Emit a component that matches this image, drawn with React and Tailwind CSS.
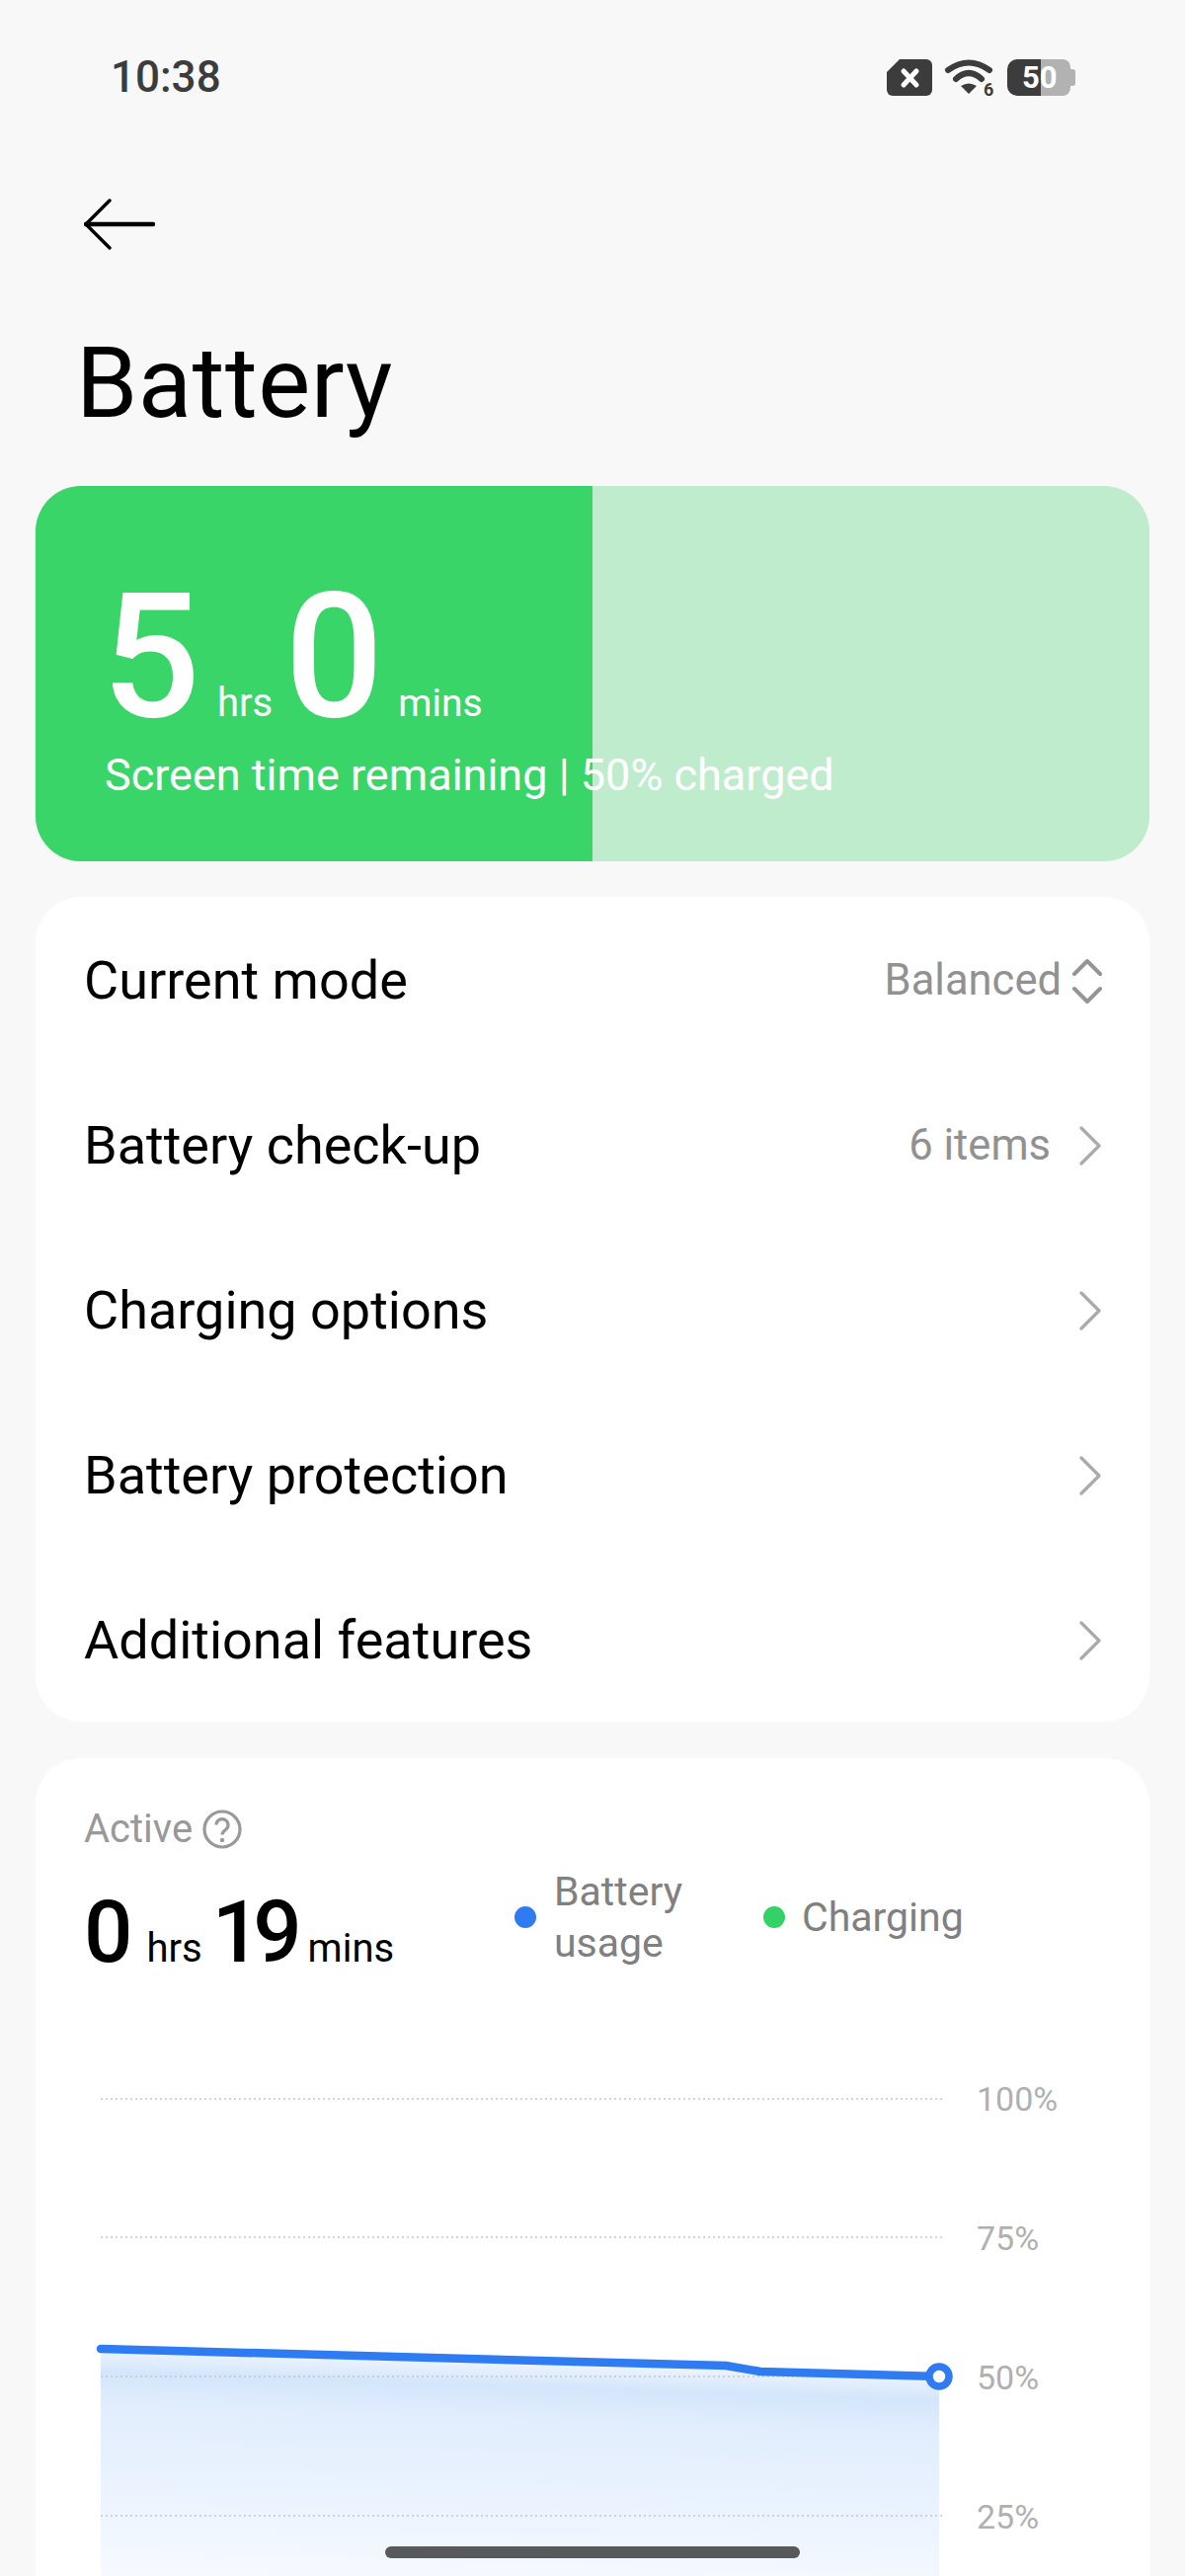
import React from 'react';

const rows = [
  { label: 'Current mode', value: 'Balanced', updown: true },
  { label: 'Battery check-up', value: '6 items' },
  { label: 'Charging options' },
  { label: 'Battery protection' },
  { label: 'Additional features' },
];

const Sim = () => (
  <svg width="46" height="37" viewBox="0 0 46 37">
    <path d="M13 0H40a6 6 0 0 1 6 6V31a6 6 0 0 1-6 6H6a6 6 0 0 1-6-6V13Z" fill="#3c3c3c" />
    <path d="M17 12L30 26M30 12L17 26" stroke="#fff" strokeWidth="5" strokeLinecap="round" />
  </svg>
);

const Wifi = () => (
  <svg width="50" height="38" viewBox="0 0 50 38" className="overflow-visible">
    <path d="M3 12Q24 -3 45 12" fill="none" stroke="#3c3c3c" strokeWidth="6" strokeLinecap="round" />
    <path d="M11 21Q24 9 37 21" fill="none" stroke="#3c3c3c" strokeWidth="6" strokeLinecap="round" />
    <path d="M16 28Q24 23 32 28L24 36Z" fill="#3c3c3c" />
    <text x="39" y="38" fontSize="18" fontWeight="700" fill="#3c3c3c" fontFamily="Roboto, sans-serif">6</text>
  </svg>
);

const Battery = () => (
  <div className="relative flex h-[37px] w-[69px]">
    <div className="h-full w-[34px] rounded-l-[10px] bg-[#3c3c3c]" />
    <div className="h-full w-[30px] rounded-r-[8px] bg-[#b2b2b2]" />
    <div className="mt-[10px] h-[17px] w-[5px] rounded-r-[3px] bg-[#b2b2b2]" />
    <span className="absolute left-[15px] top-0 text-[31px] font-bold leading-[37px] text-white">50</span>
  </div>
);

const Chevron = () => (
  <svg width="24" height="40" viewBox="0 0 24 40">
    <path d="M3 2L21 20L3 38" fill="none" stroke="#aaaaaa" strokeWidth="3.200" strokeLinecap="round" strokeLinejoin="round" />
  </svg>
);

const UpDown = () => (
  <svg width="30" height="46" viewBox="0 0 30 46">
    <path d="M2 16L15 3L28 16M2 31L15 44L28 31" fill="none" stroke="#959595" strokeWidth="4" strokeLinecap="round" strokeLinejoin="round" />
  </svg>
);

const Chart = () => (
  <svg width="870" height="560" viewBox="0 0 870 560" className="shrink-0">
    <defs>
      <linearGradient id="area" gradientUnits="userSpaceOnUse" x1="440" y1="274" x2="430" y2="574">
        <stop offset="0" stopColor="#edf4fe" />
        <stop offset="0.08" stopColor="#d4e6fb" />
        <stop offset="0.2" stopColor="#e2eefd" />
        <stop offset="0.4" stopColor="#e8f1fe" />
        <stop offset="0.55" stopColor="#eef5fe" />
        <stop offset="0.72" stopColor="#f5f9ff" />
        <stop offset="1" stopColor="#fbfdff" />
      </linearGradient>
    </defs>
    <path d="M6 260L639 277L674 283L855 288V560H6Z" fill="url(#area)" />
    {[7, 147, 288, 429].map((y) => (
      <line key={y} x1="6" y1={y} x2="860" y2={y} stroke="#c4c6c8" strokeWidth="1.500" strokeDasharray="2 3" />
    ))}
    <path d="M6 260L639 277L674 283L855 288" fill="none" stroke="#2f7bf2" strokeWidth="8.500" strokeLinecap="round" strokeLinejoin="round" />
    <circle cx="855" cy="288" r="10" fill="#fff" stroke="#2f7bf2" strokeWidth="7.500" />
  </svg>
);

export default function App() {
  return (
    <div className="relative h-[2608px] w-[1200px] overflow-hidden bg-[#f8f8f8] font-['Roboto',sans-serif] text-black">
      {/* status bar */}
      <div className="flex items-center justify-between pl-[112px] pr-[111px] pt-[53px]">
        <span className="text-[44px] font-medium leading-[50px] text-[#3c3c3c]">10:38</span>
        <div className="flex items-center gap-[13px]">
          <Sim />
          <Wifi />
          <Battery />
        </div>
      </div>

      {/* back arrow */}
      <div className="ml-[85px] mt-[98px]">
        <svg width="72" height="52" viewBox="0 0 72 52" className="block">
          <path d="M26 2L2 26L26 50" fill="none" stroke="#000" strokeWidth="3.400" strokeLinecap="round" strokeLinejoin="round" />
          <path d="M2 26H70" fill="none" stroke="#000" strokeWidth="4.500" strokeLinecap="round" />
        </svg>
      </div>

      <h1 className="ml-[77px] mt-[75px] text-[100px] font-normal leading-[120px] tracking-[0.5px]">Battery</h1>

      {/* green card */}
      <div className="relative mx-[36px] mt-[44px] h-[380px] overflow-hidden rounded-[46px] bg-[#c0ecce]">
        <div className="absolute inset-y-0 left-0 w-[564px] bg-[#3ad569]" />
        <div className="relative pl-[67px] pt-[88px] text-white">
          <div className="flex items-baseline leading-[170px]">
            <span className="text-[176px] font-medium">5</span>
            <span className="ml-[17px] text-[40px]">hrs</span>
            <span className="ml-[12px] text-[176px] font-medium">0</span>
            <span className="ml-[15px] text-[39px]">mins</span>
          </div>
          <div className="ml-[3px] mt-[-40px] text-[45px] leading-[56px]">Screen time remaining | 50% charged</div>
        </div>
      </div>

      {/* settings list */}
      <div className="mx-[36px] mt-[36px] rounded-[46px] bg-white">
        {rows.map((row) => (
          <div key={row.label} className="flex h-[167px] items-center justify-between pl-[49px] pr-[48px] pt-[2px]">
            <span className="text-[54px] leading-[64px]">{row.label}</span>
            <div className={row.updown ? 'flex items-center gap-[11px]' : 'flex items-center gap-[28px]'}>
              {row.value && <span className="text-[43.500px] leading-[56px] text-[#919191]">{row.value}</span>}
              {row.updown ? <UpDown /> : <Chevron />}
            </div>
          </div>
        ))}
      </div>

      {/* usage card */}
      <div className="mx-[36px] mt-[37px] h-[900px] rounded-[46px] bg-white pl-[49px] pt-[50px]">
        <div className="flex items-center gap-[10px] text-[#999999]">
          <span className="text-[40px] leading-[44px]">Active</span>
          <svg width="40" height="40" viewBox="0 0 40 40">
            <circle cx="20" cy="20" r="18" fill="none" stroke="#999999" strokeWidth="3.200" />
            <path d="M14 15.5a6 6 0 1 1 9.5 5c-2.500 1.800-3.500 2.800-3.500 5" fill="none" stroke="#999999" strokeWidth="3.200" />
            <circle cx="20" cy="31" r="2.200" fill="#999999" />
          </svg>
        </div>
        <div className="mt-[15px] flex items-start">
          <div className="mt-[17px] flex w-[436px] items-baseline leading-[100px]">
            <span className="text-[87px] font-medium">0</span>
            <span className="ml-[14px] text-[40px]">hrs</span>
            <span className="ml-[10px] text-[87px] font-medium tracking-[-8px]">19</span>
            <span className="ml-[14px] text-[40px]">mins</span>
          </div>
          <div className="flex w-[252px] items-center gap-[18px]">
            <span className="h-[22px] w-[22px] rounded-full bg-[#2f7bf2]" />
            <span className="text-[41px] leading-[52px] text-[#808080]">Battery<br />usage</span>
          </div>
          <div className="mt-[26px] flex items-center gap-[17px]">
            <span className="h-[22px] w-[22px] rounded-full bg-[#33d166]" />
            <span className="text-[41px] leading-[52px] text-[#808080]">Charging</span>
          </div>
        </div>
        <div className="ml-[11px] mt-[95px] flex">
          <Chart />
          <div className="ml-[23px] mt-[-15px] flex flex-col text-[34px] text-[#b0b0b0]">
            {['100%', '75%', '50%', '25%'].map((t) => (
              <span key={t} className="h-[141px] leading-[44px]">{t}</span>
            ))}
          </div>
        </div>
      </div>

      {/* home indicator */}
      <div className="absolute left-[390px] top-[2578px] h-[12px] w-[420px] rounded-full bg-[#58595b]" />
    </div>
  );
}
